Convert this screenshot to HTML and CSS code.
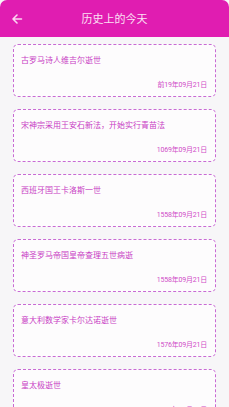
FILE: index.html
```html
<!DOCTYPE html>
<html lang="zh">
<head>
<meta charset="utf-8">
<link rel="stylesheet" href="styles.css">
</head>
<body>
<div class="app">
  <header class="bar">
    <svg class="back" width="12" height="12" viewBox="0 0 12 12"><path d="M10.5 6H2M6 2L2 6l4 4" fill="none" stroke="#fbd6f1" stroke-width="1.6" stroke-linecap="round" stroke-linejoin="round"/></svg>
    <div class="title">历史上的今天</div>
  </header>
  <div class="list">
    <div class="card"><div class="t">古罗马诗人维吉尔逝世</div><div class="d">前19年09月21日</div></div>
    <div class="card"><div class="t">宋神宗采用王安石新法，开始实行青苗法</div><div class="d">1069年09月21日</div></div>
    <div class="card"><div class="t">西班牙国王卡洛斯一世</div><div class="d">1558年09月21日</div></div>
    <div class="card"><div class="t">神圣罗马帝国皇帝查理五世病逝</div><div class="d">1558年09月21日</div></div>
    <div class="card"><div class="t">意大利数学家卡尔达诺逝世</div><div class="d">1576年09月21日</div></div>
    <div class="card"><div class="t">皇太极逝世</div><div class="d">1643年09月21日</div></div>
  </div>
</div>
</body>
</html>
```
FILE: styles.css
```css
html, body { margin: 0; padding: 0; }
body { background: #f7f6f8; font-family: "Noto Sans CJK SC", "Noto Sans", sans-serif; overflow: hidden; }
.app { width: 229px; height: 407px; overflow: hidden; }
.bar { height: 37px; background: #e01db1; border-radius: 7px 7px 0 0; display: flex; align-items: center; position: relative; }
.back { margin-left: 11px; }
.title { position: absolute; left: 0; right: 0; text-align: center; color: #fbe0f4; font-size: 11px; line-height: 37px; }
.list { padding: 7px 13px 0; display: flex; flex-direction: column; gap: 12px; }
.card { height: 53px; box-sizing: border-box; border: 1px dashed #c86ad4; border-radius: 5px; background: #fdfcfd; display: flex; flex-direction: column; justify-content: space-between; padding: 9px 8px 6px 7px; }
.t { font-size: 8px; line-height: 12px; color: #c83cc4; }
.d { font-size: 7px; line-height: 10px; color: #d04cc8; text-align: right; font-family: "Roboto", "Noto Sans CJK SC", sans-serif; letter-spacing: -0.2px; }
```
